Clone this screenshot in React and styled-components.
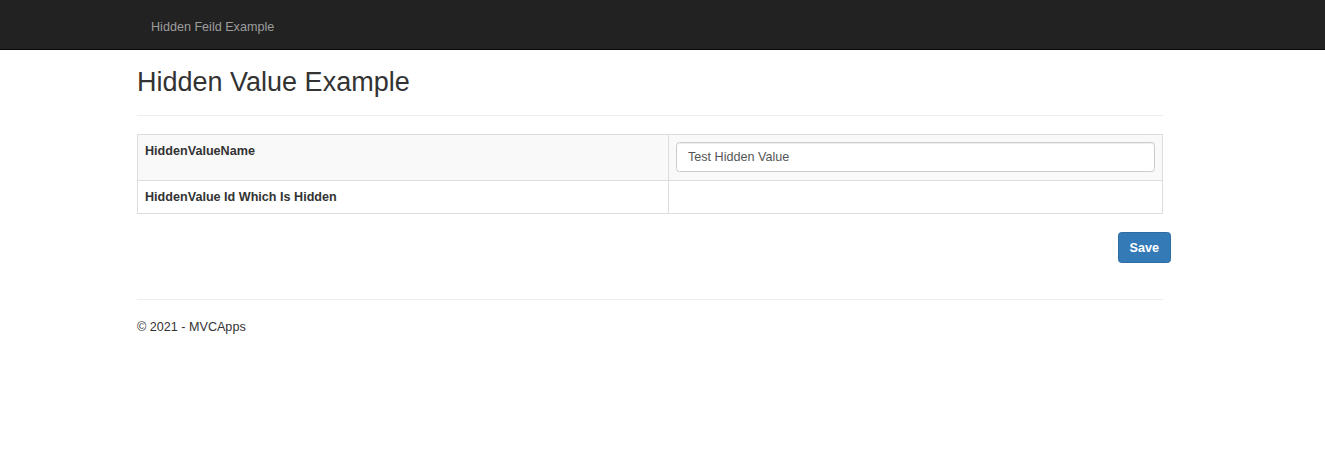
import React from 'react';
import styled, { createGlobalStyle } from 'styled-components';

const GlobalStyle = createGlobalStyle`
  html, body {
    margin: 0;
    padding: 0;
    background: #fff;
  }
  body {
    font-family: "Liberation Sans", Arial, Helvetica, sans-serif;
    font-size: 12.6px;
    line-height: 18px;
    color: #333;
  }
  * {
    box-sizing: border-box;
  }
`;

const Navbar = styled.nav`
  height: 50px;
  background-color: #222;
  border-bottom: 1px solid #080808;
`;

const NavInner = styled.div`
  width: 1026px;
  margin-left: 137px;
  display: flex;
  align-items: center;
  height: 49px;
`;

const Brand = styled.a`
  padding: 0 14px;
  font-size: 12.6px;
  color: #9d9d9d;
  text-decoration: none;
  line-height: 18px;
  margin-top: 5px;
`;

const Container = styled.div`
  width: 1026px;
  margin-left: 137px;
`;

const Title = styled.h2`
  margin: 17px 0 0;
  font-size: 27px;
  font-weight: 500;
  line-height: 30px;
  color: #333;
`;

const Rule = styled.hr`
  margin: ${props => props.$top || 18}px 0 18px;
  border: 0;
  border-top: 1px solid #eee;
  height: 0;
`;

const Table = styled.table`
  width: 100%;
  border-collapse: collapse;
  border-spacing: 0;
  border: 1px solid #ddd;
`;

const Row = styled.tr`
  background-color: ${props => (props.$striped ? '#f9f9f9' : '#fff')};
`;

const Label = styled.th`
  width: 531px;
  padding: 7px;
  text-align: left;
  vertical-align: top;
  font-weight: bold;
  border: 1px solid #ddd;
  line-height: 18px;
`;

const Cell = styled.td`
  padding: 7px 7px 8px;
  vertical-align: top;
  border: 1px solid #ddd;
  height: 33px;
`;

const Input = styled.input`
  display: block;
  width: 100%;
  height: 30px;
  padding: 5px 11px;
  font-family: inherit;
  font-size: 12.6px;
  color: #555;
  background-color: #fff;
  border: 1px solid #ccc;
  border-radius: 3.5px;
  box-shadow: inset 0 1px 1px rgba(0, 0, 0, 0.075);
  outline: none;
`;

const Actions = styled.div`
  display: flex;
  justify-content: flex-end;
  margin: 18px -8px 0 0;
`;

const Button = styled.button`
  height: 31px;
  padding: 5px 11px;
  font-family: inherit;
  font-size: 12.6px;
  font-weight: bold;
  color: #fff;
  background-color: #337ab7;
  border: 1px solid #2e6da4;
  border-radius: 3.5px;
  cursor: pointer;
`;

const Footer = styled.footer`
  line-height: 18px;
`;

export default function App() {
  return (
    <>
      <GlobalStyle />
      <Navbar>
        <NavInner>
          <Brand href="#">Hidden Feild Example</Brand>
        </NavInner>
      </Navbar>
      <Container>
        <Title>Hidden Value Example</Title>
        <Rule />
        <Table>
          <tbody>
            <Row $striped>
              <Label>HiddenValueName</Label>
              <Cell>
                <Input defaultValue="Test Hidden Value" />
              </Cell>
            </Row>
            <Row>
              <Label>HiddenValue Id Which Is Hidden</Label>
              <Cell />
            </Row>
          </tbody>
        </Table>
        <Actions>
          <Button type="button">Save</Button>
        </Actions>
        <Rule $top={36} />
        <Footer>© 2021 - MVCApps</Footer>
      </Container>
    </>
  );
}
